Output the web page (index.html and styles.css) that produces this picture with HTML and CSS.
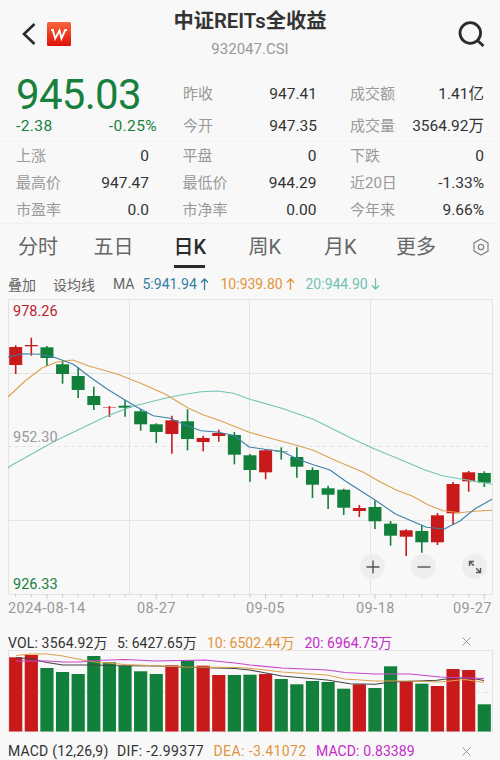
FILE: index.html
```html
<!DOCTYPE html>
<html lang="zh-CN">
<head>
    <meta charset="UTF-8">
    <meta name="viewport" content="width=device-width, initial-scale=1.0">
    <title>中证REITs全收益</title>
    <link rel="stylesheet" href="styles.css">
</head>
<body>
    <div class="page">
        <header class="header">
            <div class="header-left">
                <svg class="back" width="14" height="24" viewBox="0 0 14 24"><path d="M12.500 2 2 12l10.500 10" /></svg>
                <svg class="logo" width="24" height="24" viewBox="0 0 24 24">
                    <defs>
                        <linearGradient id="logoFill" x1="0" y1="0" x2="0" y2="1">
                            <stop offset="0" stop-color="#f4673c" />
                            <stop offset="1" stop-color="#e01208" />
                        </linearGradient>
                    </defs>
                    <rect width="24" height="24" rx="1.500" fill="url(#logoFill)" />
                    <path d="M4 8h3M5.800 8l2.400 8.500L12.500 8.500l2 8L18.200 8H20" />
                </svg>
            </div>
            <div class="title">
                <h1>中证REITs全收益</h1>
                <p>932047.CSI</p>
            </div>
            <svg class="search" width="27" height="27" viewBox="0 0 27 27"><circle cx="12.300" cy="12" r="10.300" /><path d="m19.500 19.500 6 5.500" /></svg>
        </header>

        <section class="quote">
            <div class="price">
                <div class="last">945.03</div>
                <div class="change"><span>-2.38</span><span>-0.25%</span></div>
            </div>
            <div class="col">
                <div class="item"><span>昨收</span><b>947.41</b></div>
                <div class="item"><span>今开</span><b>947.35</b></div>
            </div>
            <div class="col">
                <div class="item"><span>成交额</span><b>1.41亿</b></div>
                <div class="item"><span>成交量</span><b>3564.92万</b></div>
            </div>
        </section>

        <section class="stats">
            <div class="item"><span>上涨</span><b>0</b></div>
            <div class="item"><span>平盘</span><b>0</b></div>
            <div class="item"><span>下跌</span><b>0</b></div>
            <div class="item"><span>最高价</span><b>947.47</b></div>
            <div class="item"><span>最低价</span><b>944.29</b></div>
            <div class="item"><span>近20日</span><b>-1.33%</b></div>
            <div class="item"><span>市盈率</span><b>0.0</b></div>
            <div class="item"><span>市净率</span><b>0.00</b></div>
            <div class="item"><span>今年来</span><b>9.66%</b></div>
        </section>

        <nav class="tabs">
            <span>分时</span>
            <span>五日</span>
            <span class="active">日K</span>
            <span>周K</span>
            <span>月K</span>
            <span>更多</span>
            <svg width="18" height="18" viewBox="0 0 18 18"><path d="M9 1 16 5v8l-7 4-7-4V5z" /><circle cx="9" cy="9" r="2.700" /></svg>
        </nav>

        <div class="ma-row">
            <span class="overlay">叠加</span>
            <span class="set-ma">设均线</span>
            <span class="ma">MA</span>
            <span class="ma5">5:941.94<svg width="9" height="12" viewBox="0 0 9 12"><path d="M4.500 12V1M1 4.500 4.500 1 8 4.500" /></svg></span>
            <span class="ma10">10:939.80<svg width="9" height="12" viewBox="0 0 9 12"><path d="M4.500 12V1M1 4.500 4.500 1 8 4.500" /></svg></span>
            <span class="ma20">20:944.90<svg width="9" height="12" viewBox="0 0 9 12"><path d="M4.500 0v11M1 7.500 4.500 11 8 7.500" /></svg></span>
        </div>

        <div class="chart">
            <svg id="kline" width="500" height="303" viewBox="0 297 500 303"></svg>
            <span class="scale high">978.26</span>
            <span class="scale mid">952.30</span>
            <span class="scale low">926.33</span>
            <div class="tools">
                <button type="button"><svg width="14" height="14" viewBox="0 0 14 14"><path d="M7 .5v13M.5 7h13" /></svg></button>
                <button type="button"><svg width="14" height="14" viewBox="0 0 14 14"><path d="M.5 7h13" /></svg></button>
                <button type="button"><svg width="14" height="14" viewBox="0 0 14 14"><path d="M1.500 6V1.500H6M1.500 1.500l4.300 4.300M12.500 8v4.500H8M12.500 12.500 8.200 8.200" /></svg></button>
            </div>
        </div>
        <div class="dates">
            <span>2024-08-14</span>
            <span>08-27</span>
            <span>09-05</span>
            <span>09-18</span>
            <span>09-27</span>
        </div>

        <div class="indicator vol">
            <span class="v1">VOL: 3564.92万</span>
            <span class="v2">5: 6427.65万</span>
            <span class="v3 orange">10: 6502.44万</span>
            <span class="v4 magenta">20: 6964.75万</span>
            <svg class="close" width="9" height="9" viewBox="0 0 9 9"><path d="m.5.5 8 8M8.500.5l-8 8" /></svg>
        </div>
        <svg id="volume" class="volume" width="500" height="84" viewBox="0 650 500 84"></svg>
        <div class="indicator macd">
            <span class="m1">MACD (12,26,9)</span>
            <span class="m2">DIF: -2.99377</span>
            <span class="m3 orange">DEA: -3.41072</span>
            <span class="m4 magenta">MACD: 0.83389</span>
            <svg class="close" width="9" height="9" viewBox="0 0 9 9"><path d="m.5.5 8 8M8.500.5l-8 8" /></svg>
        </div>
    </div>
    <script src="chart.js"></script>
</body>
</html>
```
FILE: styles.css
```css
* {
    margin: 0;
    padding: 0;
    box-sizing: border-box;
}

body {
    width: 500px;
    height: 760px;
    overflow: hidden;
    background: #f8f8f8;
    color: #333;
    font-family: Roboto, "Noto Sans CJK SC", sans-serif;
}

.page {
    display: flex;
    flex-direction: column;
    height: 760px;
    overflow: hidden;
}

.page > * {
    flex-shrink: 0;
}

svg {
    display: block;
    flex: none;
}

svg path,
svg circle {
    fill: none;
    stroke: currentColor;
}

span,
b {
    white-space: nowrap;
}

.header {
    display: grid;
    grid-template-columns: 80px 1fr 80px;
    height: 70px;
}

.header-left {
    display: flex;
    gap: 11px;
    padding: 22px 0 0 22px;
}

.back {
    color: #2b2b2b;
    stroke-width: 2.6;
}

.logo {
    color: #fff;
    stroke-width: 1.9;
}

.title {
    padding-top: 7px;
    text-align: center;
}

.title h1 {
    font-size: 20.3px;
    line-height: 28px;
    font-weight: 600;
}

.title p {
    font-size: 15px;
    line-height: 28px;
    color: #999;
}

.search {
    margin: 21px 0 0 38px;
    color: #2b2b2b;
    stroke-width: 2.8;
}

.quote {
    display: grid;
    grid-template-columns: 141px 134px 134px;
    column-gap: 26px;
    height: 72px;
    padding: 8px 0 0 16px;
    border-bottom: 1px solid #f1f1f1;
}

.quote .col:last-child {
    margin: 0 -7px 0 7px;
}

.price {
    color: #17803c;
}

.last {
    height: 39px;
    font-size: 42px;
    line-height: 34px;
    letter-spacing: -0.7px;
}

.change {
    display: flex;
    justify-content: space-between;
    font-size: 15.5px;
    line-height: 18px;
    letter-spacing: 0.4px;
}

.item {
    display: flex;
    justify-content: space-between;
    align-items: baseline;
    font-size: 15px;
    line-height: 27px;
}

.item span {
    color: #999;
}

.item b {
    font-size: 15.5px;
    font-weight: 400;
}

.col .item {
    height: 32px;
    line-height: 32px;
}

.stats {
    display: grid;
    grid-template-columns: 133px 134px 134px;
    grid-auto-rows: 27px;
    column-gap: 33.5px;
    height: 82px;
    padding: 1px 16px 0;
    border-bottom: 1px solid #f1f1f1;
}

.tabs {
    display: grid;
    grid-template-columns: 75.5px 80px 75px 75.5px 72px 76px 20px;
    height: 45px;
    padding-left: 18px;
    font-size: 20px;
    line-height: 46px;
    color: #666;
    border-bottom: 1px solid #f3f3f3;
}

.tabs .active {
    width: 31px;
    height: 44px;
    color: #2b2b2b;
    font-weight: 500;
    border-bottom: 3px solid #2b2b2b;
}

.tabs svg {
    margin: 14px 0 0 0;
    color: #888;
    stroke-width: 1.3;
}

.ma-row {
    display: flex;
    align-items: center;
    height: 28px;
    padding: 1px 0 0 8px;
    font-size: 14px;
    color: #666;
}

.ma-row span {
    display: flex;
    align-items: center;
}

.ma-row svg {
    margin-left: 3px;
    stroke-width: 1.3;
}

.overlay {
    width: 45px;
}

.set-ma {
    width: 60px;
}

.ma {
    width: 29.5px;
}

.ma-row .ma5 {
    width: 78px;
    color: #357f9f;
}

.ma-row .ma10 {
    width: 85px;
    color: #e0953b;
}

.ma-row .ma20 {
    color: #6fc2b4;
}

.chart {
    position: relative;
    height: 302px;
}

/* price labels and zoom buttons lie over the candles */
.scale {
    position: absolute;
    left: 13px;
    font-size: 14.5px;
    line-height: 18px;
}

.high {
    top: 6px;
    color: #b8232f;
}

.mid {
    top: 132px;
    color: #999;
}

.low {
    top: 279px;
    color: #17803c;
}

.tools {
    position: absolute;
    left: 360px;
    top: 257px;
    display: flex;
    gap: 26px;
}

.tools button {
    display: flex;
    align-items: center;
    justify-content: center;
    width: 25px;
    height: 25px;
    border: none;
    border-radius: 50%;
    background: rgba(236, 236, 236, 0.9);
    color: #555;
}

.tools svg {
    stroke-width: 1.4;
}

.dates {
    display: grid;
    grid-template-columns: 129px 109px 110px 97px 39px;
    height: 32px;
    padding-left: 8px;
    font-size: 14.5px;
    line-height: 20px;
    letter-spacing: 0.45px;
    color: #999;
}

.indicator {
    display: flex;
    align-items: center;
    height: 20px;
    padding-left: 8px;
    font-size: 14px;
}

.orange {
    color: #e0953b;
}

.magenta {
    color: #c42bc9;
}

.close {
    color: #999;
}

.v1 {
    width: 109px;
    letter-spacing: 0.15px;
}

.v2 {
    width: 90px;
}

.v3 {
    width: 97.5px;
}

.v4 {
    width: 157.5px;
}

.m1 {
    width: 109px;
    letter-spacing: 0.2px;
}

.m2 {
    width: 96.5px;
    letter-spacing: 0.35px;
}

.m3 {
    width: 102.5px;
    letter-spacing: 0.4px;
}

.m4 {
    width: 145.5px;
    letter-spacing: 0.1px;
}

.vol {
    padding-top: 1px;
}

.volume {
    margin-top: -1px;
}

.macd {
    margin-top: 7px;
}
```
FILE: chart.js
```js
const RED = '#c81a1a';
const GREEN = '#12803a';
const STEP = 15.62;
const FIRST = 15.7;

// body top, body bottom, high, low, direction, volume top, volume bar direction if it differs
const candles = [
    [347, 365, 345.3, 374, 'r', 657.3],
    [345, 346.3, 337.7, 355.7, 'r', 655],
    [347.3, 358, 346, 366, 'g', 668],
    [364.3, 374, 361, 383.7, 'g', 672],
    [376, 390, 367.3, 398, 'g', 674],
    [396, 405, 386.7, 410, 'g', 656],
    [407.3, 407.8, 406, 417, 'r', 662.3, 'g'],
    [405.7, 407.7, 400, 416.7, 'g', 666],
    [411.3, 424.3, 409, 430.7, 'g', 671.3],
    [424.3, 432, 423.3, 443, 'g', 674],
    [420.3, 434, 415.7, 453.7, 'r', 665.3],
    [421.3, 439, 409.3, 450.3, 'g', 660.3],
    [438, 442, 435.7, 451.3, 'r', 665.7],
    [433, 436, 429.7, 441.7, 'r', 675],
    [435, 454.7, 432, 464.3, 'g', 675],
    [455.3, 470, 454, 481.7, 'g', 674.7],
    [450.3, 472.3, 449, 479.3, 'r', 674],
    [451.3, 451.8, 447.3, 459.7, 'g', 679],
    [457, 466.7, 447.3, 477.7, 'g', 684.3],
    [470, 484.7, 467.3, 498, 'g', 681],
    [488.3, 494.7, 485.7, 509, 'g', 682],
    [489.7, 507.7, 488.7, 515, 'g', 688.7],
    [508, 511, 505, 517, 'r', 684.3],
    [507, 521.3, 500.7, 529, 'g', 688],
    [523.7, 535.7, 521, 545.7, 'g', 666.3],
    [530.3, 536.7, 529.3, 556, 'r', 681],
    [531, 542.3, 525.3, 552.7, 'g', 683.7],
    [515.3, 542.3, 513, 545, 'r', 686],
    [484, 513.3, 482, 524.7, 'r', 669],
    [472.3, 481.3, 471, 491.7, 'r', 670],
    [473, 482.7, 471.3, 487, 'g', 704.3]
];

const ma5 = '8,357 23,353.700 40,354.300 55,357.500 73.300,364.300 90,377 106.700,388.700 123.300,399 136.700,407 153.300,415.700 170,418.300 185,425 201,430.700 216.700,432 233.300,435.300 249.300,447 265,449.300 281.700,451.300 296.700,458.700 313.300,464.700 330,470 345,480.700 375,500 395,513.700 411.700,521 426.700,527.300 444.300,529 460,521 475,508.700 492,499.300';
const ma10 = '8,397 25,381 42,368 57,362 73,360 88,365.700 117,374 140,383 165,394 187.700,407.700 203,414.700 218.300,420 249.300,432.300 265,436.700 281.700,441.300 298.300,445.700 313.300,450.300 335,460.300 363.300,472.300 380,481.700 396.700,490.300 411.700,495.700 428.300,505 443.300,510.700 460,512.700 473.300,511.300 492,510.300';
const ma20 = '8,468 12,465 55,441 105,417 130,407 165,398.300 185,394.300 201,391.700 217.700,391 233.300,393.300 250,399.300 281.700,408.300 313.300,419.300 335,430 355,440 373,448.300 396.700,458 425,470 443.300,476 463.300,479.300 492,484.300';

const vol5 = '16,657.500 31,659 47,662.500 63,665 95,665 110,665.500 157,666 180,667 235,668.500 250,670 282,676 327,680 350,683.700 375,684.300 392,682 437,680.300 453,678 469,677.700 484,680.500';
const vol10 = '16,655.500 31,654 47,654 63,656 80,659.500 95,662 125,664.500 155,665.800 185,667 235,667.500 250,668.300 282,672 327,675 345,679 375,681 410,681 440,682 465,679.500 484,682.500';
const vol20 = '16,661 47,661 63,662 80,662 95,660.500 125,659.500 155,661 205,660 235,663 250,665 282,668 327,670 345,672.500 375,674 410,674 440,677 484,678.500';

function line(x1, y1, x2, y2, color, width = 1, dash = '') {
    return `<line x1="${x1}" y1="${y1}" x2="${x2}" y2="${y2}" stroke="${color}" stroke-width="${width}" stroke-dasharray="${dash}" />`;
}

function rect(x, y, w, h, color) {
    return `<rect x="${x}" y="${y}" width="${w}" height="${h}" fill="${color}" />`;
}

function curve(points, color) {
    return `<polyline points="${points}" fill="none" stroke="${color}" stroke-width="1.100" stroke-linejoin="round" />`;
}

function drawKline() {
    let out = '<rect x="8.500" y="299.500" width="484" height="295" fill="none" stroke="#e4e4e4" />';
    out += line(8, 373.5, 492, 373.5, '#e4e4e4');
    out += line(8, 446.5, 492, 446.5, '#e4e4e4', 1, '4 3');
    out += line(8, 520.5, 492, 520.5, '#e4e4e4');
    [129.5, 249.5, 370.5].forEach(x => { out += line(x, 300, x, 594, '#e4e4e4'); });

    candles.forEach(([top, bottom, high, low, dir], i) => {
        const x = FIRST + STEP * i;
        const color = dir === 'r' ? RED : GREEN;
        out += line(x, 594, x, i % 7 === 2 ? 599 : 597, '#c8c8c8');
        out += line(x, high, x, low, color, 1.6);
        out += rect(x - 6.5, top, 13, bottom - top, color);
    });

    out += curve(ma20, '#72c5b6') + curve(ma10, '#dfa04e') + curve(ma5, '#3d80a5');
    document.getElementById('kline').innerHTML = out;
}

function drawVolume() {
    let out = '<rect x="8.500" y="650.500" width="484" height="81" fill="none" stroke="#e4e4e4" />';
    out += line(8, 692.5, 492, 692.5, '#e4e4e4', 1, '4 3');
    candles.forEach((c, i) => {
        const dir = c[6] || c[4];
        out += rect(FIRST + STEP * i - 6.6, c[5], 13.2, 731.5 - c[5], dir === 'r' ? RED : GREEN);
    });
    out += curve(vol5, '#444') + curve(vol10, '#dfa04e') + curve(vol20, '#c746cc');
    document.getElementById('volume').innerHTML = out;
}

drawKline();
drawVolume();
```
